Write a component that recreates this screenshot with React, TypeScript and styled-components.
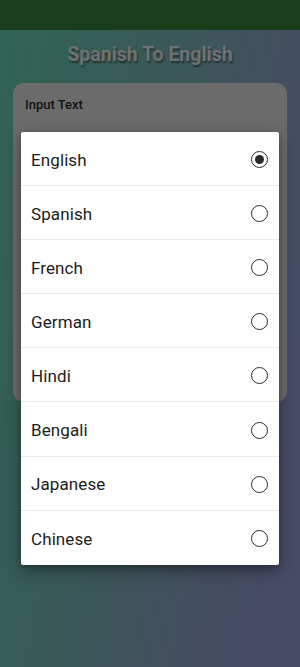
import React, { useState } from 'react'
import styled, { createGlobalStyle } from 'styled-components'

const GlobalStyle = createGlobalStyle`
  html, body {
    margin: 0;
    padding: 0;
    height: 100%;
  }
  body {
    font-family: Roboto, 'Noto Sans', Arial, sans-serif;
  }
  #root {
    height: 100%;
  }
`

const Screen = styled.div`
  position: relative;
  width: 300px;
  height: 667px;
  overflow: hidden;
  display: flex;
  flex-direction: column;
  background: linear-gradient(100deg, #2f6454 0%, #3b5858 45%, #454e62 75%, #4a4b67 100%);
`

const StatusBar = styled.div`
  height: 30px;
  flex-shrink: 0;
  background: #1a3e1c;
`

const Main = styled.div`
  display: flex;
  flex-direction: column;
  align-items: center;
  padding: 13px 13px 0;
`

const Title = styled.h1`
  margin: 0;
  font-size: 19.5px;
  font-weight: 700;
  line-height: 24px;
  color: #707070;
  text-shadow: 1px 2px 2px rgba(0, 0, 0, 0.45);
`

const Card = styled.div`
  margin-top: 16px;
  width: 100%;
  height: 319px;
  box-sizing: border-box;
  padding: 14px 12px;
  border-radius: 11px;
  background: #6b6b6b;
`

const CardLabel = styled.div`
  font-size: 13px;
  font-weight: 500;
  color: #111;
`

const Dialog = styled.div`
  position: absolute;
  top: 132px;
  left: 21px;
  width: 258px;
  background: #ffffff;
  border-radius: 2px;
  box-shadow: 0 6px 18px rgba(0, 0, 0, 0.35), 0 2px 5px rgba(0, 0, 0, 0.2);
`

const OptionRow = styled.label<{ $last: boolean }>`
  display: flex;
  align-items: center;
  justify-content: space-between;
  height: 54.1px;
  box-sizing: border-box;
  padding: 2px 11px 0 10px;
  border-bottom: ${({ $last }) => ($last ? 'none' : '1px solid #e9e9e9')};
  cursor: pointer;
`

const OptionText = styled.span`
  font-size: 17px;
  color: #1c1c1c;
  letter-spacing: 0.1px;
`

const Radio = styled.span<{ $checked: boolean }>`
  width: 17px;
  height: 17px;
  box-sizing: border-box;
  border-radius: 50%;
  border: 1.7px solid #2a2a2a;
  display: flex;
  align-items: center;
  justify-content: center;
  &::after {
    content: '';
    width: 9px;
    height: 9px;
    border-radius: 50%;
    background: #2a2a2a;
    display: ${({ $checked }) => ($checked ? 'block' : 'none')};
  }
`

const languages = ['English', 'Spanish', 'French', 'German', 'Hindi', 'Bengali', 'Japanese', 'Chinese']

const App: React.FC = () => {
  const [selected, setSelected] = useState('English')

  return (
    <>
      <GlobalStyle />
      <Screen>
        <StatusBar />
        <Main>
          <Title>Spanish To English</Title>
          <Card>
            <CardLabel>Input Text</CardLabel>
          </Card>
        </Main>
        <Dialog>
          {languages.map((lang, i) => (
            <OptionRow key={lang} $last={i === languages.length - 1} onClick={() => setSelected(lang)}>
              <OptionText>{lang}</OptionText>
              <Radio $checked={selected === lang} />
            </OptionRow>
          ))}
        </Dialog>
      </Screen>
    </>
  )
}

export default App
